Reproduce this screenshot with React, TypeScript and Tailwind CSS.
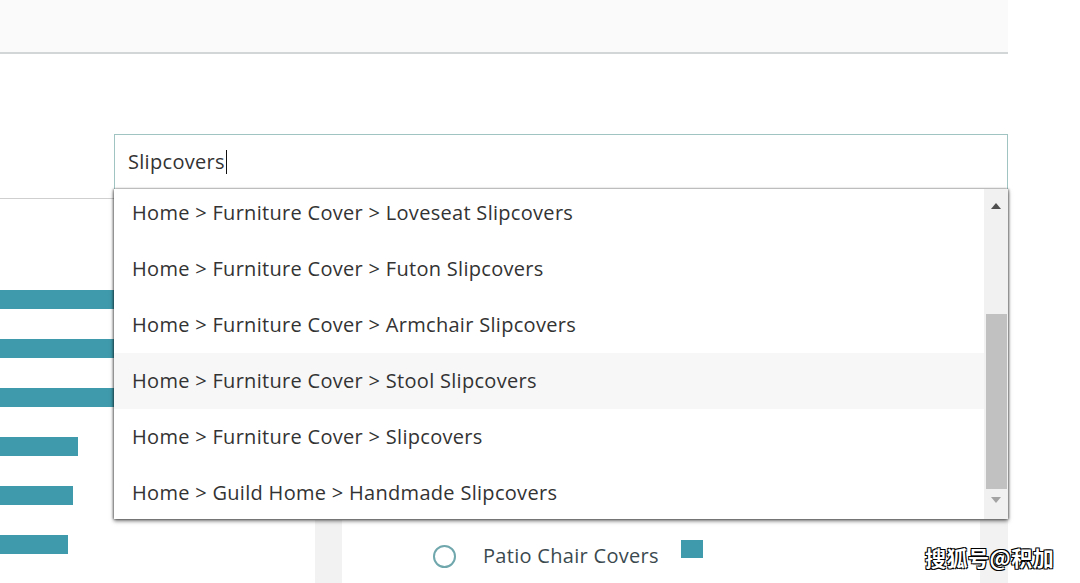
const categories = [
  'Home > Furniture Cover > Loveseat Slipcovers',
  'Home > Furniture Cover > Futon Slipcovers',
  'Home > Furniture Cover > Armchair Slipcovers',
  'Home > Furniture Cover > Stool Slipcovers',
  'Home > Furniture Cover > Slipcovers',
  'Home > Guild Home > Handmade Slipcovers',
];

// bar widths for the chart behind the dropdown
const bars = [140, 140, 140, 78, 73, 68];

export default function App() {
  return (
    <div className="relative h-[583px] w-[1080px] overflow-hidden bg-white font-['Open_Sans',sans-serif] text-[#333]">
      {/* top band */}
      <div className="h-[54px] w-[1008px] border-b-2 border-[#d3d6d6] bg-[#fafafa]" />

      {/* search input */}
      <div className="ml-[114px] mt-[80px] flex h-[56px] w-[894px] items-center border border-[#9fc4c2] bg-white px-[13px]">
        <span className="text-[20px] tracking-[0.3px] text-[#333]">Slipcovers</span>
        <span className="ml-[1px] h-[24px] w-[1.5px] bg-[#111]" />
      </div>

      {/* content below */}
      <div className="flex h-[393px] items-start">
        <div className="w-[140px]">
          <div className="mt-[8px] h-px w-[114px] bg-[#cfcfcf]" />
          <div className="mt-[91px] flex flex-col gap-[30px]">
            {bars.map((w, i) => (
              <div key={i} className="h-[19px] bg-[#3f9aab]" style={{ width: w }} />
            ))}
          </div>
        </div>
        <div className="ml-[175px] mt-[330px] h-[80px] w-[27px] bg-[#f2f2f2]" />
        <div className="ml-[91px] mt-[351px] flex w-[547px] items-center">
          <span className="h-[23px] w-[23px] rounded-full border-2 border-[#6fa7ad]" />
          <span className="ml-[27px] text-[20px] tracking-[0.3px] text-[#3b4a4f]">Patio Chair Covers</span>
          <span className="ml-[22px] -mt-[14px] h-[18px] w-[22px] bg-[#3f9aab]" />
        </div>
        <div className="mt-[330px] h-[80px] w-[28px] bg-[#f2f2f2]" />
      </div>

      {/* dropdown menu */}
      <div className="absolute left-[114px] top-[189px] flex h-[330px] w-[894px] bg-white shadow-[0_2px_4px_rgba(0,0,0,0.55),-1px_0_2px_rgba(0,0,0,0.35),1px_0_2px_rgba(0,0,0,0.35)]">
        <div className="flex-1 overflow-hidden">
          <ul className="-mt-[4px]">
            {categories.map((c, i) => (
              <li
                key={c}
                className={`flex h-[56px] items-center pl-[18px] text-[20px] tracking-[0.3px] text-[#333] ${i === 3 ? 'bg-[#f7f7f8]' : ''}`}
              >
                {c}
              </li>
            ))}
          </ul>
        </div>
        <div className="flex w-[24px] flex-col items-center bg-[#f1f1f1]">
          <svg width="10" height="6" viewBox="0 0 10 6" className="mt-[14px]">
            <path d="M5 0 L10 6 L0 6 Z" fill="#505050" />
          </svg>
          <div className="mt-[105px] h-[175px] w-[21px] bg-[#c1c1c1]" />
          <svg width="10" height="6" viewBox="0 0 10 6" className="mt-[8px]">
            <path d="M0 0 L10 0 L5 6 Z" fill="#a3a3a3" />
          </svg>
        </div>
      </div>

      {/* watermark */}
      <div className="absolute left-[925px] top-[542px] font-['Noto_Sans_CJK_SC',sans-serif] text-[21px] font-bold tracking-[0.5px] text-white [text-shadow:1px_1px_0_#000,-1px_-1px_0_#000,1px_-1px_0_#000,-1px_1px_0_#000]">
        搜狐号@积加
      </div>
    </div>
  );
}
